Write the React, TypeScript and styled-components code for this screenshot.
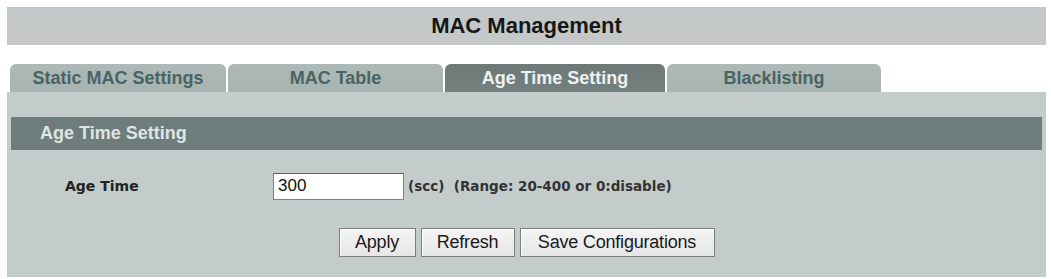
import React, { useState } from "react";
import styled, { createGlobalStyle } from "styled-components";

const Global = createGlobalStyle`
  html, body { margin: 0; padding: 0; background: #ffffff; }
  body { font-family: "Liberation Sans", Arial, sans-serif; }
`;

const Page = styled.div`
  width: 1051px;
  height: 279px;
  box-sizing: border-box;
  padding: 7px 5px 0 7px;
  display: flex;
  flex-direction: column;
  overflow: hidden;
`;

const TitleBar = styled.div`
  height: 38px;
  background: #c4c8c8;
  display: flex;
  align-items: center;
  justify-content: center;
  font-family: "Liberation Sans", Arial, sans-serif;
  font-weight: bold;
  font-size: 22px;
  color: #151818;
`;

const TabStrip = styled.div`
  margin-top: 18px;
  height: 29px;
  display: flex;
  gap: 2px;
  padding-left: 3px;
  align-items: flex-end;
`;

const Tab = styled.button<{ $active?: boolean; $w: number }>`
  width: ${(p) => p.$w}px;
  height: 28px;
  border: none;
  padding: 0;
  border-radius: 6px 6px 0 0;
  background: ${(p) =>
    p.$active
      ? "linear-gradient(#6d7977, #73807e)"
      : "linear-gradient(#adb9b7, #a7b4b2)"};
  color: ${(p) => (p.$active ? "#eef1f1" : "#4a6363")};
  font-family: "Liberation Sans", Arial, sans-serif;
  font-weight: bold;
  font-size: 18px;
  display: flex;
  align-items: center;
  justify-content: center;
  cursor: pointer;
`;

const Panel = styled.div`
  height: 185px;
  background: #c3cbcb;
  padding: 25px 4px 0 4px;
  box-sizing: border-box;
  display: flex;
  flex-direction: column;
`;

const SectionHeader = styled.div`
  height: 33px;
  background: #6e7d7b;
  display: flex;
  align-items: center;
  padding-left: 29px;
  font-family: "Liberation Sans", Arial, sans-serif;
  font-weight: bold;
  font-size: 18px;
  color: #dfe4e4;
`;

const FieldRow = styled.div`
  margin-top: 22px;
  height: 28px;
  display: flex;
  align-items: center;
`;

const Label = styled.div`
  width: 262px;
  padding-left: 54px;
  box-sizing: border-box;
  font-family: "DejaVu Sans", Verdana, sans-serif;
  font-weight: bold;
  font-size: 14px;
  color: #222;
`;

const TextInput = styled.input`
  width: 131px;
  height: 27px;
  box-sizing: border-box;
  border: 1px solid #7d8181;
  border-top-color: #5d6161;
  background: #ffffff;
  font-family: "Liberation Sans", Arial, sans-serif;
  font-size: 17px;
  padding: 0 4px;
  color: #111;
  outline: none;
`;

const Hint = styled.div`
  margin-left: 4px;
  font-family: "DejaVu Sans", Verdana, sans-serif;
  font-weight: bold;
  font-size: 13.5px;
  color: #333;
`;

const ButtonRow = styled.div`
  margin-top: 28px;
  display: flex;
  justify-content: center;
  gap: 5px;
`;

const Btn = styled.button<{ $w: number }>`
  width: ${(p) => p.$w}px;
  height: 29px;
  box-sizing: border-box;
  border: 1px solid #7a7e7e;
  background: linear-gradient(#f4f4f4, #e6e6e6);
  box-shadow: inset 1px 1px 0 #ffffff;
  font-family: "Liberation Sans", Arial, sans-serif;
  font-size: 18px;
  color: #1a1a1a;
  padding: 0;
  cursor: pointer;
  letter-spacing: -0.2px;
`;

const tabs = [
  { label: "Static MAC Settings", w: 216 },
  { label: "MAC Table", w: 215 },
  { label: "Age Time Setting", w: 220 },
  { label: "Blacklisting", w: 214 },
];

export default function App() {
  const [active, setActive] = useState(2);
  const [age, setAge] = useState("300");
  return (
    <>
      <Global />
      <Page>
        <TitleBar>MAC Management</TitleBar>
        <TabStrip>
          {tabs.map((t, i) => (
            <Tab key={t.label} $w={t.w} $active={i === active} onClick={() => setActive(i)}>
              {t.label}
            </Tab>
          ))}
        </TabStrip>
        <Panel>
          <SectionHeader>Age Time Setting</SectionHeader>
          <FieldRow>
            <Label>Age Time</Label>
            <TextInput value={age} onChange={(e) => setAge(e.target.value)} />
            <Hint>(scc)&nbsp; (Range: 20-400 or 0:disable)</Hint>
          </FieldRow>
          <ButtonRow>
            <Btn $w={77}>Apply</Btn>
            <Btn $w={94}>Refresh</Btn>
            <Btn $w={195}>Save Configurations</Btn>
          </ButtonRow>
        </Panel>
      </Page>
    </>
  );
}
